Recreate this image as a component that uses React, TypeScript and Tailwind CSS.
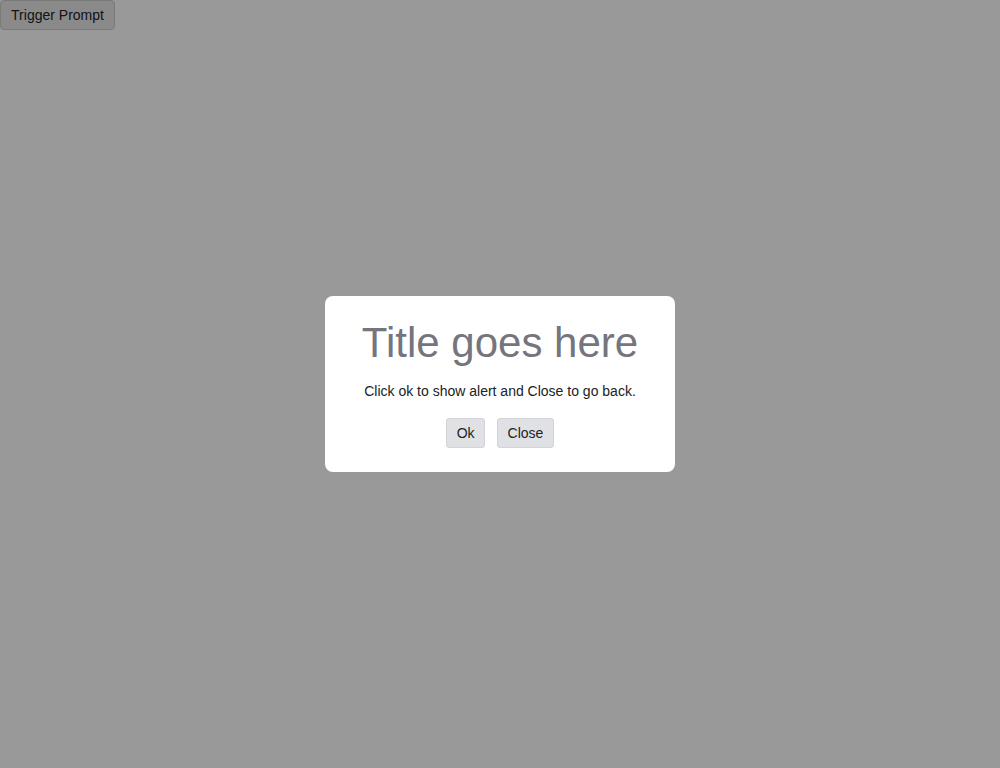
import React from 'react';

const App: React.FC = () => {
  return (
    <div className="relative min-h-screen bg-white font-['Liberation_Sans',Arial,sans-serif]">
      <button className="h-[30px] w-[115px] rounded-[4px] border border-[#cccccc] bg-[#e6e6e6] text-[14px] text-[#222]">
        Trigger Prompt
      </button>

      <div className="fixed inset-0 flex items-center justify-center bg-black/40">
        <div className="w-[350px] rounded-lg bg-white px-5 pt-[23px] pb-[24px] text-center">
          <h1 className="text-[42px] leading-[48px] text-[#75757d]">Title goes here</h1>
          <p className="mt-[14px] text-[14px] leading-5 text-[#222]">
            Click ok to show alert and Close to go back.
          </p>
          <div className="mt-[17px] flex justify-center gap-3">
            <button className="h-[30px] rounded-[3px] border border-[#d3d4d7] bg-[#e0e1e4] px-[9.5px] text-[14px] text-[#222]">
              Ok
            </button>
            <button className="h-[30px] rounded-[3px] border border-[#d3d4d7] bg-[#e0e1e4] px-[9.5px] text-[14px] text-[#222]">
              Close
            </button>
          </div>
        </div>
      </div>
    </div>
  );
};

export default App;
